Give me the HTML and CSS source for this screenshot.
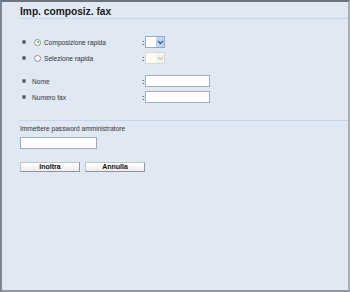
FILE: index.html
```html
<!DOCTYPE html>
<html>
<head>
<meta charset="utf-8">
<link rel="stylesheet" href="styles.css">
</head>
<body>
<div class="frame">
  <div class="title">Imp. composiz. fax</div>
  <div class="rows group1">
    <div class="row">
      <span class="bullet"></span>
      <span class="radio on"></span>
      <span class="label">Composizione rapida</span>
      <span class="colon">:</span>
      <span class="select"><span class="arrow"><svg width="7" height="5" viewBox="0 0 7 5"><path d="M1 1 L3.5 3.5 L6 1" fill="none" stroke="#3e5e94" stroke-width="1.4"/></svg></span></span>
    </div>
    <div class="row">
      <span class="bullet"></span>
      <span class="radio"></span>
      <span class="label">Selezione rapida</span>
      <span class="colon">:</span>
      <span class="select dis"><span class="arrow"><svg width="7" height="5" viewBox="0 0 7 5"><path d="M1 1 L3.5 3.5 L6 1" fill="none" stroke="#c8c8c0" stroke-width="1.4"/></svg></span></span>
    </div>
  </div>
  <div class="rows group2">
    <div class="row">
      <span class="bullet"></span>
      <span class="label wide">Nome</span>
      <span class="colon">:</span>
      <span class="input"></span>
    </div>
    <div class="row">
      <span class="bullet"></span>
      <span class="label wide">Numero fax</span>
      <span class="colon">:</span>
      <span class="input"></span>
    </div>
  </div>
  <div class="sep"></div>
  <div class="pw">
    <div class="pwlabel">Immettere password amministratore</div>
    <span class="pwinput"></span>
  </div>
  <div class="buttons">
    <span class="btn">Inoltra</span>
    <span class="btn">Annulla</span>
  </div>
</div>
</body>
</html>
```
FILE: styles.css
```css
html, body { margin: 0; padding: 0; }
body { width: 350px; height: 292px; overflow: hidden; font-family: "Liberation Sans", Arial, sans-serif; }
.frame {
  box-sizing: border-box;
  width: 350px; height: 292px;
  background: #dfe8f3;
  border-top: 2px solid #6a7380;
  border-left: 2px solid #7d8794;
  border-right: 2px solid #a7aeb8;
  border-bottom: 2px solid #8e96a2;
  padding-left: 17px;
}
.title {
  font-weight: bold; font-size: 10.2px; color: #1a1a1a;
  padding-top: 4px; height: 12px; line-height: 12px;
  border-bottom: 1px solid #c8d7ea;
  padding-left: 1px;
}
.rows { display: flex; flex-direction: column; }
.group1 { margin-top: 17px; gap: 4px; }
.group2 { margin-top: 11px; gap: 4px; }
.row { display: flex; align-items: center; height: 12px; font-size: 6.6px; color: #333; }
.bullet { width: 4px; height: 4px; background: #4c5563; border: 1px solid #8a93a0; box-sizing: border-box; margin-left: 3px; margin-right: 6px; }
.radio { width: 7px; height: 7px; border: 1px solid #8b8f96; border-radius: 50%; background: #fff; box-sizing: border-box; margin-left: 2px; margin-right: 3px; position: relative; }
.radio.on::after { content: ""; position: absolute; left: 1.5px; top: 1.5px; width: 2px; height: 2px; border-radius: 50%; background: #39b54a; }
.label { width: 98px; white-space: nowrap; }
.label.wide { width: 110px; }
.colon { width: 3px; font-weight: bold; font-size: 7px; }
.select { width: 20px; height: 12px; box-sizing: border-box; border: 1px solid #9aaac4; background: #fff; display: flex; justify-content: flex-end; }
.select .arrow { width: 8px; background: #c3d4f0; display: flex; align-items: center; justify-content: center; }
.select.dis { border-color: #d9d9d0; background: #fbfbf6; }
.select.dis .arrow { background: #f4f4ee; }
.input { width: 65px; height: 12px; box-sizing: border-box; border: 1px solid #a2acb9; background: #fff; }
.sep { margin-top: 17px; border-top: 1px solid #c8d7ea; }
.pw { padding-left: 1px; font-size: 6.6px; color: #333; }
.pwlabel { margin-top: 3px; height: 10px; line-height: 10px; }
.pwinput { display: block; margin-top: 3px; width: 77px; height: 12px; box-sizing: border-box; border: 1px solid #a2acb9; background: #fff; }
.buttons { display: flex; gap: 5px; margin-top: 13px; padding-left: 1px; }
.btn { width: 60px; height: 10px; box-sizing: border-box; border: 1px solid #8f959e; border-top-color: #c0c4ca; border-left-color: #c0c4ca; background: linear-gradient(#ffffff, #ececec); font-size: 7px; font-weight: bold; color: #111; text-align: center; line-height: 8px; }
```
